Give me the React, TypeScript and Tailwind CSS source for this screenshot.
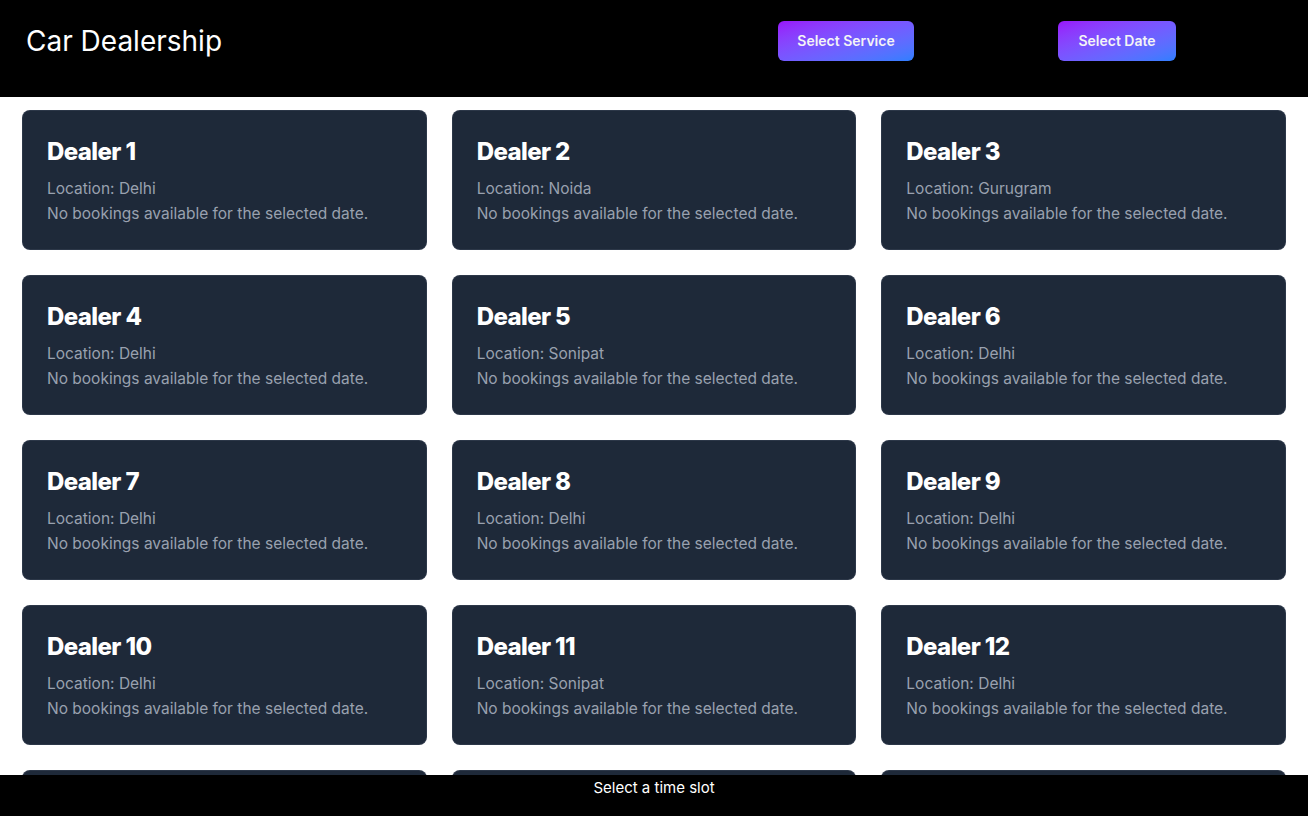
import React from "react";

const dealers = [
  { name: "Dealer 1", location: "Delhi" },
  { name: "Dealer 2", location: "Noida" },
  { name: "Dealer 3", location: "Gurugram" },
  { name: "Dealer 4", location: "Delhi" },
  { name: "Dealer 5", location: "Sonipat" },
  { name: "Dealer 6", location: "Delhi" },
  { name: "Dealer 7", location: "Delhi" },
  { name: "Dealer 8", location: "Delhi" },
  { name: "Dealer 9", location: "Delhi" },
  { name: "Dealer 10", location: "Delhi" },
  { name: "Dealer 11", location: "Sonipat" },
  { name: "Dealer 12", location: "Delhi" },
  { name: "Dealer 13", location: "Delhi" },
  { name: "Dealer 14", location: "Delhi" },
  { name: "Dealer 15", location: "Delhi" },
];

export default function App() {
  return (
    <div className="min-h-screen bg-white font-['Inter','Noto_Sans',sans-serif]">
      <header className="h-[97px] bg-black flex items-start pt-[21px] pl-[26px] pr-[132px]">
        <div className="flex-1 h-10 flex items-center">
          <h1 className="text-[28px] leading-none font-normal text-white">Car Dealership</h1>
        </div>
        <button className="h-10 w-[136px] rounded-md bg-gradient-to-br from-purple-600 to-blue-500 text-gray-100 text-sm font-semibold">
          Select Service
        </button>
        <div className="w-[144px]" />
        <button className="h-10 w-[118px] rounded-md bg-gradient-to-br from-purple-600 to-blue-500 text-gray-100 text-sm font-semibold">
          Select Date
        </button>
      </header>
      <main className="grid grid-cols-3 gap-[25px] px-[22px] pt-[13px] pb-[60px]">
        {dealers.map((d) => (
          <div
            key={d.name}
            className="h-[140px] rounded-lg bg-gray-800 border border-gray-700/60 px-6 pt-[25px]"
          >
            <h2 className="text-2xl font-extrabold text-white leading-8 tracking-[-0.6px]">{d.name}</h2>
            <p className="mt-[8px] text-[15.5px] leading-[25px] text-gray-400">Location: {d.location}</p>
            <p className="text-[15.5px] leading-[25px] text-gray-400">No bookings available for the selected date.</p>
          </div>
        ))}
      </main>
      <footer className="fixed bottom-0 left-0 right-0 h-[41px] bg-black text-center">
        <span className="text-[15px] leading-6 text-white">Select a time slot</span>
      </footer>
    </div>
  );
}
